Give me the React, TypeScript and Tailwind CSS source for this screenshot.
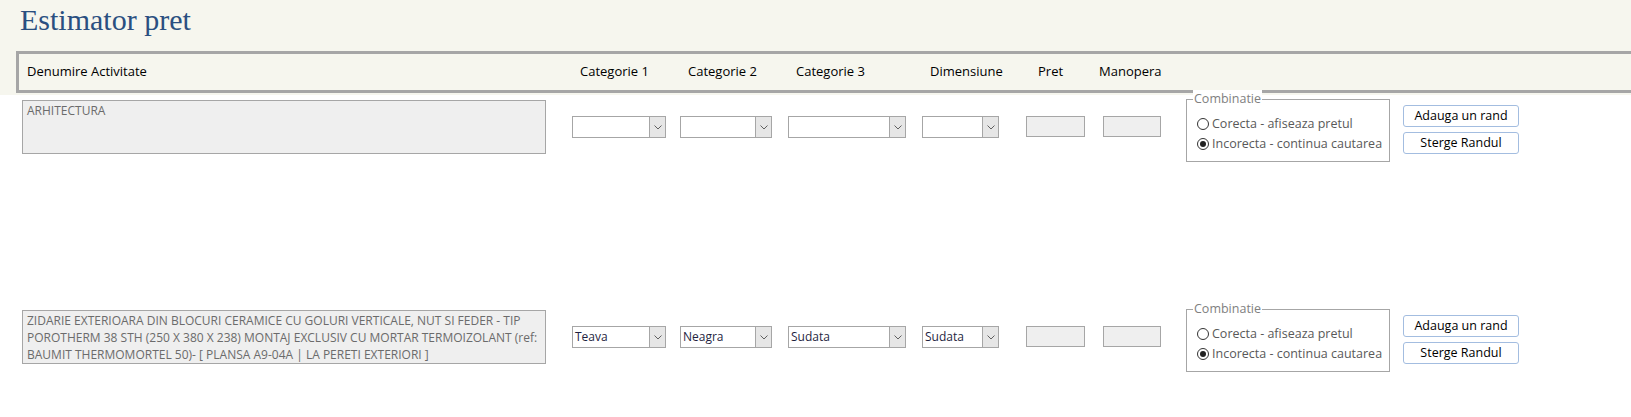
import React from "react";

const font = { fontFamily: '"Open Sans", "Liberation Sans", sans-serif' };

const Select = ({ w, value }: { w: string; value?: string }) => (
  <div className={`flex h-[22px] ${w} border border-[#a6a6a6] bg-white`}>
    <div className="flex-1 truncate pl-[2px] text-[12px] leading-[20px] text-[#1f1f3f]">{value}</div>
    <div className="flex w-[16px] items-center justify-center border-l border-[#a6a6a6] bg-[#e6e6e6]">
      <svg width="8" height="5" viewBox="0 0 8 5">
        <path d="M0.5 0.5 L4 4 L7.5 0.5" fill="none" stroke="#606060" strokeWidth="1" />
      </svg>
    </div>
  </div>
);

const Radio = ({ checked, label }: { checked?: boolean; label: string }) => (
  <div className="flex items-center gap-[3px] text-[12.5px] leading-[20px] text-[#595959]">
    <span className="flex h-[12px] w-[12px] items-center justify-center rounded-full border border-[#333] bg-white">
      {checked && <span className="h-[6px] w-[6px] rounded-full bg-[#222]" />}
    </span>
    {label}
  </div>
);

const Row = ({ text, values }: { text: string; values: string[] }) => (
  <div className="flex items-start">
    <div className="ml-[22px] h-[54px] w-[524px] overflow-hidden border border-[#a6a6a6] bg-[#efefef] px-[4px] pt-[1px] text-[12px] leading-[17px] text-[#6b6b6b]">
      {text}
    </div>
    <div className="ml-[26px] mt-[16px]"><Select w="w-[94px]" value={values[0]} /></div>
    <div className="ml-[14px] mt-[16px]"><Select w="w-[92px]" value={values[1]} /></div>
    <div className="ml-[16px] mt-[16px]"><Select w="w-[118px]" value={values[2]} /></div>
    <div className="ml-[16px] mt-[16px]"><Select w="w-[77px]" value={values[3]} /></div>
    <div className="ml-[27px] mt-[16px] h-[21px] w-[59px] border border-[#a6a6a6] bg-[#efefef]" />
    <div className="ml-[18px] mt-[16px] h-[21px] w-[58px] border border-[#a6a6a6] bg-[#efefef]" />
    <div className="relative ml-[25px] mt-[-1px] h-[63px] w-[204px] border border-[#a6a6a6] pl-[10px] pt-[14px]">
      <span className="absolute left-[6px] top-[-10px] bg-white px-[1px] text-[12.5px] leading-[18px] text-[#7f7f7f]">Combinatie</span>
      <Radio label="Corecta - afiseaza pretul" />
      <Radio checked label="Incorecta - continua cautarea" />
    </div>
    <div className="ml-[13px] mt-[5px] flex flex-col gap-[5px]">
      <button className="h-[22px] w-[116px] rounded-[3px] border border-[#a3bde0] bg-white text-[12.5px] text-black">Adauga un rand</button>
      <button className="h-[22px] w-[116px] rounded-[3px] border border-[#a3bde0] bg-white text-[12.5px] text-black">Sterge Randul</button>
    </div>
  </div>
);

export default function App() {
  return (
    <div className="h-[417px] w-[1631px] overflow-hidden bg-white" style={font}>
      <div className="bg-[#f6f6ee] pb-[2px]">
        <h1 className="pl-[20px] pt-[1px] text-[30px] leading-[38px] text-[#2a4f80]" style={{ fontFamily: '"Liberation Serif", serif' }}>
          Estimator pret
        </h1>
        <div className="ml-[16px] mt-[12px] flex h-[42px] items-center border-[3px] border-r-0 border-[#a6a6a6] text-[13px] text-black">
          <span className="ml-[8px] w-[553px]">Denumire Activitate</span>
          <span className="w-[108px]">Categorie 1</span>
          <span className="w-[108px]">Categorie 2</span>
          <span className="w-[134px]">Categorie 3</span>
          <span className="w-[108px]">Dimensiune</span>
          <span className="w-[61px]">Pret</span>
          <span>Manopera</span>
        </div>
      </div>
      <div className="mt-[5px]">
        <Row text="ARHITECTURA" values={["", "", "", ""]} />
      </div>
      <div className="mt-[148px]">
        <Row
          text="ZIDARIE EXTERIOARA DIN BLOCURI CERAMICE CU GOLURI VERTICALE, NUT SI FEDER - TIP POROTHERM 38 STH (250 X 380 X 238) MONTAJ EXCLUSIV CU MORTAR TERMOIZOLANT (ref: BAUMIT THERMOMORTEL 50)- [ PLANSA A9-04A | LA PERETI EXTERIORI ]"
          values={["Teava", "Neagra", "Sudata", "Sudata"]}
        />
      </div>
    </div>
  );
}
